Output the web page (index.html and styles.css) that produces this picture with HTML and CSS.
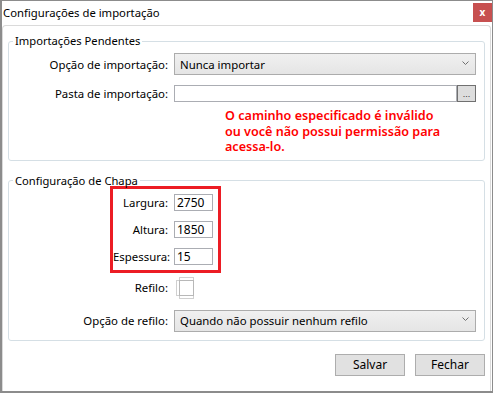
FILE: index.html
```html
<!DOCTYPE html>
<html lang="pt-BR">
<head>
    <meta charset="UTF-8">
    <title>Configurações de importação</title>
    <link rel="stylesheet" href="styles.css">
</head>
<body>
    <div class="window">
        <div class="titlebar">
            <span class="title">Configurações de importação</span>
            <button class="close">x</button>
        </div>
        <div class="content">
            <fieldset class="group first">
                <legend>Importações Pendentes</legend>
                <div class="row">
                    <label class="lbl">Opção de importação:</label>
                    <div class="combo">
                        <span>Nunca importar</span>
                        <svg class="chev" width="7" height="4" viewBox="0 0 7 4"><polyline points="0.5,0.5 3.5,3.5 6.5,0.5" fill="none" stroke="#707070" stroke-width="1"/></svg>
                    </div>
                </div>
                <div class="row path-row">
                    <label class="lbl">Pasta de importação:</label>
                    <input class="text path" type="text" value="">
                    <button class="browse">...</button>
                </div>
                <p class="error">O caminho especificado é inválido<br>ou você não possui permissão para<br>acessa-lo.</p>
            </fieldset>

            <fieldset class="group second">
                <legend>Configuração de Chapa</legend>
                <div class="highlight">
                    <div class="srow">
                        <label class="slbl">Largura:</label>
                        <input class="text small" type="text" value="2750">
                    </div>
                    <div class="srow">
                        <label class="slbl">Altura:</label>
                        <input class="text small" type="text" value="1850">
                    </div>
                    <div class="srow">
                        <label class="slbl">Espessura:</label>
                        <input class="text small" type="text" value="15">
                    </div>
                </div>
                <div class="row check-row">
                    <label class="lbl">Refilo:</label>
                    <svg class="check" width="21" height="22" viewBox="0 0 21 22">
                        <rect x="0.5" y="3.5" width="17" height="15" fill="#fff" stroke="#d0d0d0"/>
                        <rect x="3.5" y="0.5" width="14" height="21" fill="none" stroke="#d0d0d0"/>
                        <rect x="3.5" y="3.5" width="14" height="15" fill="none" stroke="#b8b8b8"/>
                    </svg>
                </div>
                <div class="row refilo-row">
                    <label class="lbl">Opção de refilo:</label>
                    <div class="combo">
                        <span>Quando não possuir nenhum refilo</span>
                        <svg class="chev" width="7" height="4" viewBox="0 0 7 4"><polyline points="0.5,0.5 3.5,3.5 6.5,0.5" fill="none" stroke="#707070" stroke-width="1"/></svg>
                    </div>
                </div>
            </fieldset>

            <div class="actions">
                <button class="btn">Salvar</button>
                <button class="btn">Fechar</button>
            </div>
        </div>
    </div>
</body>
</html>
```

FILE: styles.css
```css
* {
    box-sizing: border-box;
}
body {
    margin: 0;
    font-family: "Noto Sans", "Open Sans", sans-serif;
    font-size: 11.4px;
    color: #000;
    background-color: #fff;
}
.window {
    width: 493px;
    height: 393px;
    border: 1px solid #8c8c8c;
    border-left-width: 2px;
    border-bottom-width: 2px;
    background-color: #fff;
    display: flex;
    flex-direction: column;
}
.titlebar {
    height: 24px;
    display: flex;
    justify-content: space-between;
    align-items: flex-start;
    padding-left: 1px;
}
.title {
    font-size: 11.3px;
    line-height: 16px;
    margin-top: 4px;
}
.close {
    width: 19px;
    height: 19px;
    margin-top: 2px;
    border: none;
    padding: 0;
    background-color: #c75050;
    color: #fff;
    font-family: "Noto Sans", sans-serif;
    font-weight: bold;
    font-size: 10px;
    line-height: 17px;
}
.content {
    flex: 1;
    border: 1px solid #dadada;
    border-bottom: none;
    border-radius: 4px 4px 0 0;
    margin-right: 1px;
    padding: 0 5px 0 5px;
}
.group {
    border: 1px solid #d5dfe5;
    border-radius: 3px;
    margin: 0;
    padding: 0;
    min-width: 0;
}
.group legend {
    font-size: 11.2px;
    line-height: 14px;
    padding: 0 2px;
    margin-left: 4px;
}
.first {
    margin-top: 8px;
    padding: 5px 0 5px 0;
}
.second {
    margin-top: 13px;
    padding: 0 0 8px 0;
}
.row {
    display: flex;
    align-items: center;
}
.lbl {
    width: 159px;
    text-align: right;
    margin-right: 6px;
    flex-shrink: 0;
}
.combo {
    width: 302px;
    height: 22px;
    border: 1px solid #acacac;
    background: linear-gradient(#f0f0f0, #e5e5e5);
    display: flex;
    align-items: center;
    justify-content: space-between;
    padding: 0 6px 0 5px;
    font-size: 11.4px;
}
.chev {
    margin-bottom: 3px;
}
.path-row {
    margin-top: 10px;
}
.text {
    height: 17px;
    border: 1px solid #abadb3;
    font-family: inherit;
    font-size: 12px;
    padding: 0 2px;
    outline: none;
}
.path {
    width: 283px;
}
.browse {
    width: 19px;
    height: 17px;
    border: 1px solid #707070;
    background-color: #dddddd;
    padding: 0;
    font-size: 9px;
    line-height: 14px;
    color: #333;
}
.error {
    margin: 6px 0 0 216px;
    color: #ff0000;
    font-size: 12.6px;
    font-weight: 600;
    line-height: 15.5px;
}
.highlight {
    width: 111px;
    margin: -2px 0 0 101px;
    border: 3px solid #ec1c24;
    padding: 5px 5px 5px 0;
    display: flex;
    flex-direction: column;
    gap: 10px;
}
.srow {
    display: flex;
    align-items: center;
}
.slbl {
    width: 55px;
    text-align: right;
    margin-right: 6px;
    flex-shrink: 0;
}
.small {
    width: 39px;
}
.check-row {
    margin-top: 4px;
}
.check {
    margin-left: 2px;
}
.refilo-row {
    margin-top: 11px;
}
.actions {
    display: flex;
    justify-content: flex-end;
    gap: 10px;
    margin-top: 13px;
}
.btn {
    width: 70px;
    height: 22px;
    border: 1px solid #adadad;
    background-color: #e1e1e1;
    font-family: inherit;
    font-size: 12px;
    padding: 0;
}
```
